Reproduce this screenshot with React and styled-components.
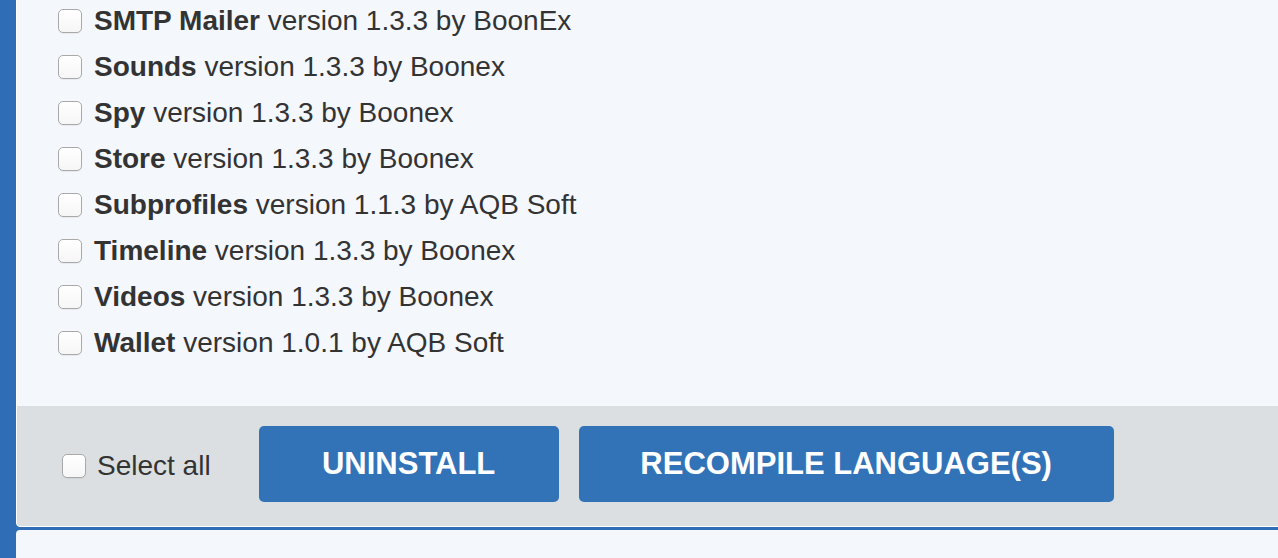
import React from 'react';
import styled, { createGlobalStyle } from 'styled-components';

const GlobalStyle = createGlobalStyle`
  html, body {
    margin: 0;
    padding: 0;
    background: #2f6db6;
  }
  body {
    font-family: "Liberation Sans", Arial, Helvetica, sans-serif;
    color: #333;
  }
`;

const modules = [
  { name: 'SMTP Mailer', version: '1.3.3', vendor: 'BoonEx' },
  { name: 'Sounds', version: '1.3.3', vendor: 'Boonex' },
  { name: 'Spy', version: '1.3.3', vendor: 'Boonex' },
  { name: 'Store', version: '1.3.3', vendor: 'Boonex' },
  { name: 'Subprofiles', version: '1.1.3', vendor: 'AQB Soft' },
  { name: 'Timeline', version: '1.3.3', vendor: 'Boonex' },
  { name: 'Videos', version: '1.3.3', vendor: 'Boonex' },
  { name: 'Wallet', version: '1.0.1', vendor: 'AQB Soft' },
];

export default function App() {
  return (
    <Page>
      <GlobalStyle />
      <Card>
        <ModuleList>
          {modules.map((m) => (
            <ModuleRow key={m.name}>
              <Check type="checkbox" />
              <span>
                <b>{m.name}</b> version {m.version} by {m.vendor}
              </span>
            </ModuleRow>
          ))}
        </ModuleList>
        <Footer>
          <SelectAll>
            <Check type="checkbox" />
            Select all
          </SelectAll>
          <ActionButton $width={300}>Uninstall</ActionButton>
          <ActionButton $width={535}>Recompile Language(s)</ActionButton>
        </Footer>
      </Card>
      <NextCard />
    </Page>
  );
}

const Page = styled.div`
  height: 558px;
  overflow: hidden;
  padding-left: 16px;
  display: flex;
  flex-direction: column;
  gap: 3px;
`;

const Card = styled.div`
  margin-top: -12px;
  margin-right: -20px;
  background: #f4f7fc;
  border: 1px solid #ffffff;
  border-radius: 4px;
  overflow: hidden;
`;

const ModuleList = styled.div`
  padding: 9px 0 40px 41px;
  display: flex;
  flex-direction: column;
`;

const ModuleRow = styled.label`
  display: flex;
  align-items: center;
  gap: 12px;
  height: 46px;
  font-size: 28px;
  color: #333;

  b {
    font-weight: 700;
  }
`;

const Check = styled.input`
  appearance: none;
  margin: 0;
  width: 24px;
  height: 24px;
  flex: none;
  border: 1px solid #a9a9a9;
  border-radius: 5px;
  background: linear-gradient(#ffffff, #f6f6f6);
  box-shadow: 0 1px 1px rgba(0, 0, 0, 0.06);
`;

const Footer = styled.div`
  height: 120px;
  box-sizing: border-box;
  background: #dcdfe2;
  display: flex;
  align-items: flex-start;
  padding: 20px 0 0 45px;
  gap: 20px;
`;

const SelectAll = styled.label`
  display: flex;
  align-items: center;
  align-self: center;
  gap: 11px;
  margin-top: -20px;
  margin-right: 28px;
  font-size: 28px;
  color: #333;
`;

const ActionButton = styled.button`
  width: ${({ $width }) => $width}px;
  height: 76px;
  border: none;
  border-radius: 5px;
  background: #3273b8;
  color: #ffffff;
  font-family: "Liberation Sans", Arial, sans-serif;
  font-weight: 700;
  font-size: 31px;
  text-transform: uppercase;
  cursor: pointer;
`;

const NextCard = styled.div`
  flex: 1;
  margin-right: -20px;
  background: #f4f7fc;
  border-radius: 4px 4px 0 0;
`;
